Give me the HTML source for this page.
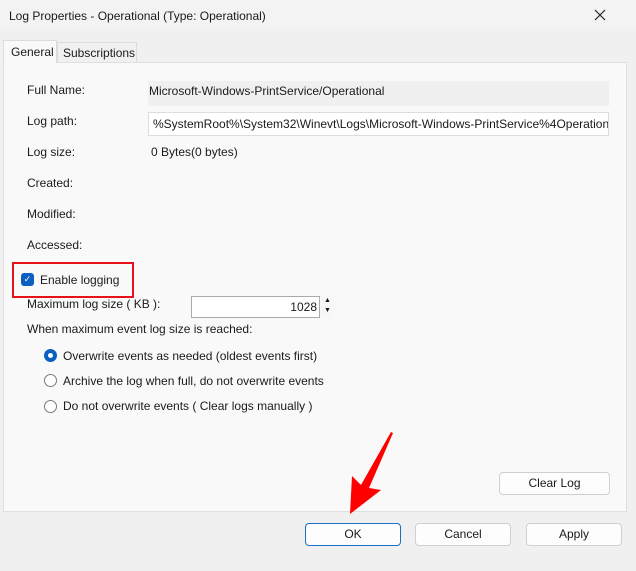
<!DOCTYPE html>
<html><head><style>
*{margin:0;padding:0;box-sizing:border-box}
body{width:636px;height:571px;background:#f0f0f0;font-family:"Liberation Sans",sans-serif;font-size:12px;color:#1a1a1a;position:relative;overflow:hidden}
.a{position:absolute;white-space:nowrap}
.btn{position:absolute;height:23px;border:1px solid #d0d0d0;border-radius:4px;background:#fdfdfd;text-align:center;line-height:21px}
.radio{position:absolute;width:13px;height:13px;border:1px solid #7a7a7a;border-radius:50%;background:#fff}
</style></head><body>
<div class="a" style="left:0;top:0;width:636px;height:31px;background:#f3f3f3"></div>
<div class="a" style="left:9px;top:9px">Log Properties - Operational (Type: Operational)</div>
<svg class="a" style="left:594px;top:9px" width="12" height="12"><path d="M1 1L11 11M11 1L1 11" stroke="#222" stroke-width="1.2"/></svg>
<div class="a" style="left:3px;top:62px;width:624px;height:450px;background:#f9f9f9;border:1px solid #e0e0e0"></div>
<div class="a" style="left:3px;top:40px;width:54px;height:23px;background:#f9f9f9;border:1px solid #dcdcdc;border-bottom:none;padding:4px 0 0 7px">General</div>
<div class="a" style="left:57px;top:42px;width:80px;height:20px;background:#f0f0f0;border:1px solid #dcdcdc;border-bottom:none;padding:3px 0 0 5px">Subscriptions</div>
<div class="a" style="left:27px;top:83px">Full Name:</div>
<div class="a" style="left:148px;top:81px;width:461px;height:25px;background:#f0f0f0;padding:3px 0 0 1px">Microsoft-Windows-PrintService/Operational</div>
<div class="a" style="left:27px;top:114px">Log path:</div>
<div class="a" style="left:148px;top:112px;width:461px;height:24px;background:#fff;border:1px solid #ddd;padding:4px 0 0 4px;overflow:hidden">%SystemRoot%\System32\Winevt\Logs\Microsoft-Windows-PrintService%4Operation</div>
<div class="a" style="left:27px;top:145px">Log size:</div>
<div class="a" style="left:151px;top:145px">0 Bytes(0 bytes)</div>
<div class="a" style="left:27px;top:176px">Created:</div>
<div class="a" style="left:27px;top:207px">Modified:</div>
<div class="a" style="left:27px;top:238px">Accessed:</div>
<div class="a" style="left:12px;top:262px;width:122px;height:36px;border:2px solid #e8101a"></div>
<div class="a" style="left:21px;top:273px;width:13px;height:13px;background:#0b5fc0;border-radius:3px;color:#fff;font-size:9px;line-height:13px;text-align:center">✓</div>
<div class="a" style="left:40px;top:273px">Enable logging</div>
<div class="a" style="left:27px;top:297px">Maximum log size ( KB ):</div>
<div class="a" style="left:191px;top:296px;width:129px;height:22px;background:#fff;border:1px solid #aaa;text-align:right;padding:3px 2px 0 0">1028</div>
<div class="a" style="left:321px;top:296px;width:13px;height:22px;font-size:7px;line-height:10px;text-align:center;background:#f7f7f7">▲<br>▼</div>
<div class="a" style="left:27px;top:322px">When maximum event log size is reached:</div>
<div class="radio" style="left:44px;top:349px;border:4px solid #0b5fc0"></div>
<div class="a" style="left:63px;top:349px">Overwrite events as needed (oldest events first)</div>
<div class="radio" style="left:44px;top:374px"></div>
<div class="a" style="left:63px;top:374px">Archive the log when full, do not overwrite events</div>
<div class="radio" style="left:44px;top:400px"></div>
<div class="a" style="left:63px;top:399px">Do not overwrite events ( Clear logs manually )</div>
<div class="btn" style="left:499px;top:472px;width:111px">Clear Log</div>
<div class="btn" style="left:305px;top:523px;width:96px;border-color:#1a6fc9">OK</div>
<div class="btn" style="left:415px;top:523px;width:96px">Cancel</div>
<div class="btn" style="left:526px;top:523px;width:96px">Apply</div>
<svg class="a" style="left:0;top:0" width="636" height="571"><polygon points="393,433 369,488 381,490 350,514 352,476 361,485 391,432" fill="#f00"/></svg>
</body></html>
